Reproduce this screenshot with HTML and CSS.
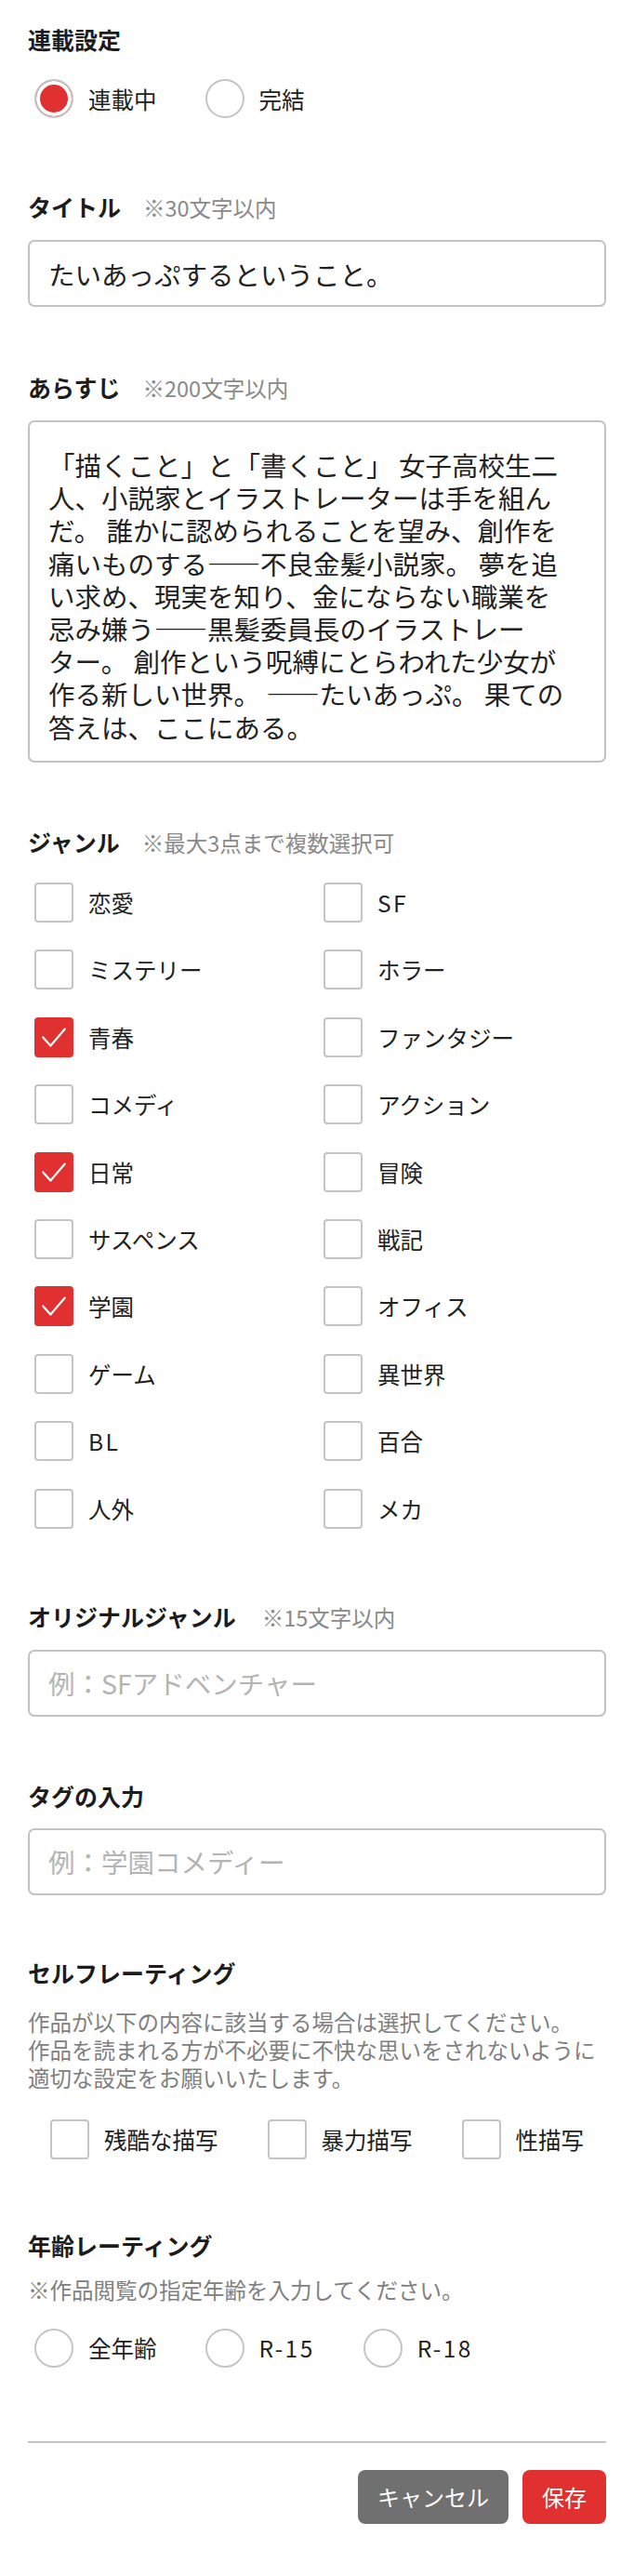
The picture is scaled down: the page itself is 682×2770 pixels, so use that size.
FILE: index.html
```html
<!DOCTYPE html>
<html lang="ja">
<head>
<meta charset="utf-8">
<title>作品設定</title>
<link rel="stylesheet" href="styles.css">
</head>
<body>
<form class="page">
  <section class="sec sec-first">
    <h2 class="label">連載設定</h2>
    <div class="choices">
      <label class="choice"><span class="radio on"></span><span class="text">連載中</span></label>
      <label class="choice"><span class="radio"></span><span class="text">完結</span></label>
    </div>
  </section>

  <section class="sec sec-title">
    <h2 class="label">タイトル<span class="note">※30文字以内</span></h2>
    <input class="field" type="text" value="たいあっぷするということ。">
  </section>

  <section class="sec sec-abstract">
    <h2 class="label">あらすじ<span class="note">※200文字以内</span></h2>
    <div class="field area">「描くこと」と「書くこと」 女子高校生二<br>人、小説家とイラストレーターは手を組ん<br>だ。 誰かに認められることを望み、創作を<br>痛いものする——不良金髪小説家。 夢を追<br>い求め、現実を知り、金にならない職業を<br>忌み嫌う——黒髪委員長のイラストレー<br>ター。 創作という呪縛にとらわれた少女が<br>作る新しい世界。 ——たいあっぷ。 果ての<br>答えは、ここにある。</div>
  </section>

  <section class="sec sec-genre">
    <h2 class="label">ジャンル<span class="note">※最大3点まで複数選択可</span></h2>
    <div class="grid">
      <label class="choice"><span class="box"></span><span class="text">恋愛</span></label>
      <label class="choice"><span class="box"></span><span class="text latin">SF</span></label>
      <label class="choice"><span class="box"></span><span class="text">ミステリー</span></label>
      <label class="choice"><span class="box"></span><span class="text">ホラー</span></label>
      <label class="choice"><span class="box on"><svg viewBox="0 0 42 42"><polyline points="8,21 17,31 34,11"/></svg></span><span class="text">青春</span></label>
      <label class="choice"><span class="box"></span><span class="text">ファンタジー</span></label>
      <label class="choice"><span class="box"></span><span class="text">コメディ</span></label>
      <label class="choice"><span class="box"></span><span class="text">アクション</span></label>
      <label class="choice"><span class="box on"><svg viewBox="0 0 42 42"><polyline points="8,21 17,31 34,11"/></svg></span><span class="text">日常</span></label>
      <label class="choice"><span class="box"></span><span class="text">冒険</span></label>
      <label class="choice"><span class="box"></span><span class="text">サスペンス</span></label>
      <label class="choice"><span class="box"></span><span class="text">戦記</span></label>
      <label class="choice"><span class="box on"><svg viewBox="0 0 42 42"><polyline points="8,21 17,31 34,11"/></svg></span><span class="text">学園</span></label>
      <label class="choice"><span class="box"></span><span class="text">オフィス</span></label>
      <label class="choice"><span class="box"></span><span class="text">ゲーム</span></label>
      <label class="choice"><span class="box"></span><span class="text">異世界</span></label>
      <label class="choice"><span class="box"></span><span class="text latin">BL</span></label>
      <label class="choice"><span class="box"></span><span class="text">百合</span></label>
      <label class="choice"><span class="box"></span><span class="text">人外</span></label>
      <label class="choice"><span class="box"></span><span class="text">メカ</span></label>
    </div>
  </section>

  <section class="sec sec-original">
    <h2 class="label">オリジナルジャンル<span class="note note-wide">※15文字以内</span></h2>
    <input class="field" type="text" placeholder="例：SFアドベンチャー">
  </section>

  <section class="sec sec-tag">
    <h2 class="label">タグの入力</h2>
    <input class="field" type="text" placeholder="例：学園コメディー">
  </section>

  <section class="sec sec-self">
    <h2 class="label">セルフレーティング</h2>
    <p class="desc">作品が以下の内容に該当する場合は選択してください。<br>作品を読まれる方が不必要に不快な思いをされないように<br>適切な設定をお願いいたします。</p>
    <div class="choices choices-self">
      <label class="choice"><span class="box"></span><span class="text">残酷な描写</span></label>
      <label class="choice"><span class="box"></span><span class="text">暴力描写</span></label>
      <label class="choice"><span class="box"></span><span class="text">性描写</span></label>
    </div>
  </section>

  <section class="sec sec-age">
    <h2 class="label">年齢レーティング</h2>
    <p class="desc desc-age">※作品閲覧の指定年齢を入力してください。</p>
    <div class="choices choices-age">
      <label class="choice"><span class="radio"></span><span class="text">全年齢</span></label>
      <label class="choice"><span class="radio"></span><span class="text latin">R-15</span></label>
      <label class="choice"><span class="radio"></span><span class="text latin">R-18</span></label>
    </div>
  </section>

  <hr class="divider">

  <div class="actions">
    <button type="button" class="btn btn-cancel">キャンセル</button>
    <button type="button" class="btn btn-save">保存</button>
  </div>
</form>
</body>
</html>
```

FILE: styles.css
```css
* {
  box-sizing: border-box;
  margin: 0;
  padding: 0;
}

html, body {
  background: #ffffff;
}

body {
  margin: 0;
  font-family: "Noto Sans CJK JP", "Noto Sans", sans-serif;
  color: #222222;
}

.page {
  width: 682px;
  padding: 24px 30px 55px;
}

.label {
  display: flex;
  align-items: baseline;
  font-size: 25px;
  font-weight: 700;
  line-height: 36px;
  color: #1c1c1c;
  white-space: nowrap;
}

.note {
  margin-left: 24px;
  font-size: 23.5px;
  font-weight: 400;
  color: #8a8a8a;
}

.note-wide {
  margin-left: 28px;
}

.sec-title { margin-top: 77px; }
.sec-abstract { margin-top: 68px; }
.sec-genre { margin-top: 67px; }
.sec-original { margin-top: 76px; }
.sec-tag { margin-top: 67px; }
.sec-self { margin-top: 65px; }
.sec-age { margin-top: 74px; }

.field {
  display: block;
  width: 100%;
  height: 72px;
  margin-top: 17px;
  padding: 0 20px;
  border: 2px solid #c2c2c2;
  border-radius: 7px;
  background: #ffffff;
  font-family: inherit;
  font-size: 28.5px;
  color: #222222;
  outline: none;
}

.field::placeholder {
  color: #b4b4b4;
}

.area {
  height: 368px;
  padding: 28px 20px 0;
  font-size: 28.5px;
  line-height: 35.2px;
  white-space: nowrap;
  overflow: hidden;
}

.choices {
  display: flex;
  gap: 45px;
  margin-top: 25px;
}

.choice {
  display: flex;
  align-items: center;
  height: 42px;
  padding-left: 7px;
  font-size: 24.5px;
  color: #222222;
  white-space: nowrap;
}

.choice .text {
  margin-left: 16px;
}

.choice .latin {
  letter-spacing: 0.1em;
}

.radio {
  flex: none;
  width: 42px;
  height: 42px;
  border: 2px solid #c4c4c4;
  border-radius: 50%;
  background: #ffffff;
}

.radio.on {
  background: #e0302f;
  box-shadow: inset 0 0 0 4px #ffffff;
}

.box {
  flex: none;
  display: flex;
  width: 42px;
  height: 43px;
  border: 2px solid #c4c4c4;
  border-radius: 4px;
  background: #ffffff;
}

.box.on {
  border-color: #e0302f;
  background: #e0302f;
}

.box svg {
  width: 100%;
  height: 100%;
}

.box polyline {
  fill: none;
  stroke: #ffffff;
  stroke-width: 2.4;
  stroke-linecap: round;
  stroke-linejoin: round;
}

.grid {
  display: grid;
  grid-template-columns: 1fr 1fr;
  row-gap: 29.4px;
  margin-top: 25px;
}

.grid .choice {
  height: 43px;
}

.desc {
  margin-top: 20px;
  font-size: 23.5px;
  line-height: 30px;
  color: #808080;
  white-space: nowrap;
}

.desc-age {
  margin-top: 15px;
}

.choices-self {
  gap: 46px;
  margin-top: 31px;
  padding-left: 17px;
}

.choices-age {
  margin-top: 27px;
}

.divider {
  height: 2px;
  margin-top: 79px;
  border: none;
  background: #c4c4c4;
}

.actions {
  display: flex;
  justify-content: flex-end;
  gap: 15px;
  margin-top: 29px;
}

.btn {
  height: 58px;
  padding: 0 21px;
  border: none;
  border-radius: 8px;
  font-family: inherit;
  font-size: 24px;
  color: #ffffff;
}

.btn-cancel {
  background: #707070;
}

.btn-save {
  background: #e0302f;
}
```
